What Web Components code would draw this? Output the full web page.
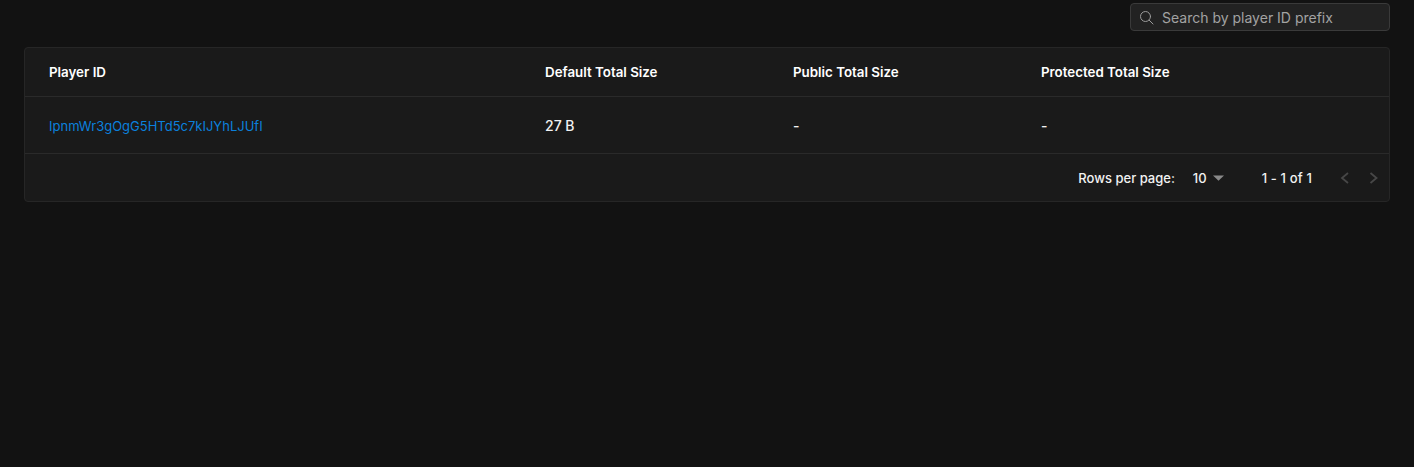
<!DOCTYPE html>
<html>
<head>
<meta charset="utf-8">
<title>Players</title>
<style>
  html, body { margin: 0; height: 100%; background: #121212; }
  body { font-family: Inter, "Liberation Sans", sans-serif; color: #fff; }
</style>
</head>
<body>
<player-page></player-page>

<script>
'use strict'

const searchTemplate = document.createElement('template');
searchTemplate.innerHTML = `
<style>
  :host {
    display: flex;
    align-items: center;
    box-sizing: border-box;
    width: 260px;
    height: 28px;
    padding: 0 8px;
    gap: 8px;
    background: #222222;
    border: 1px solid #3a3a3a;
    border-radius: 4px;
  }
  svg { flex: none; width: 15px; height: 15px; }
  input {
    flex: 1;
    min-width: 0;
    padding: 2px 0 0;
    border: 0;
    outline: 0;
    background: transparent;
    color: #fff;
    font: 400 14px/20px Inter, "Liberation Sans", sans-serif;
  }
  input::placeholder { color: #a3a3a3; opacity: 1; }
</style>
<svg viewBox="0 0 15 15" fill="none" stroke="#9b9b9b" stroke-width="1" stroke-linecap="round">
  <circle cx="6.5" cy="6.5" r="5"/>
  <path d="M10.2 10.2 14 14"/>
</svg>
<input type="text" aria-label="Search">
`;

class SearchBox extends HTMLElement {
  constructor() {
    super();
    this.attachShadow({ mode: 'open' });
    this.shadowRoot.appendChild(searchTemplate.content.cloneNode(true));
    this.shadowRoot.querySelector('input').placeholder = this.getAttribute('placeholder');
  }
}
customElements.define('search-box', SearchBox);

const rowTemplate = document.createElement('template');
rowTemplate.innerHTML = `
<style>
  :host {
    display: grid;
    grid-template-columns: 4fr 2fr 2fr 3fr;
    align-items: center;
    box-sizing: border-box;
    height: 57px;
    padding-top: 2px;
    border-bottom: 1px solid #2a2a2a;
    font: 500 14px/20px Inter, "Liberation Sans", sans-serif;
    color: #f2f2f2;
  }
  :host([head]) {
    height: 49px;
    padding-top: 0;
    font-weight: 600;
    font-size: 13.33px;
    color: #fff;
  }
  ::slotted(*) { padding-left: 24px; }
</style>
<slot></slot>
`;

class DataRow extends HTMLElement {
  constructor() {
    super();
    this.attachShadow({ mode: 'open' });
    this.shadowRoot.appendChild(rowTemplate.content.cloneNode(true));
  }
}
customElements.define('data-row', DataRow);

const pagerTemplate = document.createElement('template');
pagerTemplate.innerHTML = `
<style>
  :host {
    display: flex;
    align-items: center;
    justify-content: flex-end;
    height: 47px;
    padding-right: 4px;
    font: 500 13px/20px Inter, "Liberation Sans", sans-serif;
    color: #f2f2f2;
  }
  .label, .size, .range { padding-top: 1px; }
  .size {
    display: flex;
    align-items: center;
    gap: 6px;
    margin-left: 18px;
  }
  .range { margin-left: 38px; letter-spacing: .15px; }
  .arrows { display: flex; gap: 4px; margin-left: 21px; }
  .arrows svg { display: block; width: 24px; height: 24px; }
</style>
<span class="label">Rows per page:</span>
<span class="size">10
  <svg width="11" height="6" viewBox="0 0 11 6"><path d="M0 0.5h11L5.5 5.8z" fill="#8a8a8a"/></svg>
</span>
<span class="range">1 - 1 of 1</span>
<span class="arrows">
  <svg viewBox="0 0 24 24" fill="none" stroke="#474747" stroke-width="1.8"><path d="M15 7l-6 5 6 5"/></svg>
  <svg viewBox="0 0 24 24" fill="none" stroke="#474747" stroke-width="1.8"><path d="M9.5 7l6 5-6 5"/></svg>
</span>
`;

class TablePager extends HTMLElement {
  constructor() {
    super();
    this.attachShadow({ mode: 'open' });
    this.shadowRoot.appendChild(pagerTemplate.content.cloneNode(true));
  }
}
customElements.define('table-pager', TablePager);

const cardTemplate = document.createElement('template');
cardTemplate.innerHTML = `
<style>
  :host {
    display: block;
    background: #1a1a1a;
    border: 1px solid #262626;
    border-radius: 4px;
  }
</style>
<slot></slot>
`;

class TableCard extends HTMLElement {
  constructor() {
    super();
    this.attachShadow({ mode: 'open' });
    this.shadowRoot.appendChild(cardTemplate.content.cloneNode(true));
  }
}
customElements.define('table-card', TableCard);

const pageTemplate = document.createElement('template');
pageTemplate.innerHTML = `
<style>
  :host {
    display: block;
    padding: 3px 24px 0;
  }
  .bar {
    display: flex;
    justify-content: flex-end;
    margin-bottom: 16px;
  }
  a { color: #0b80dc; text-decoration: none; font-weight: 400; font-size: 13px; }
</style>
<div class="bar">
  <search-box placeholder="Search by player ID prefix"></search-box>
</div>
<table-card>
  <data-row head>
    <span>Player ID</span>
    <span>Default Total Size</span>
    <span>Public Total Size</span>
    <span>Protected Total Size</span>
  </data-row>
  <data-row>
    <a href="#">IpnmWr3gOgG5HTd5c7kIJYhLJUfI</a>
    <span>27 B</span>
    <span>-</span>
    <span>-</span>
  </data-row>
  <table-pager></table-pager>
</table-card>
`;

class PlayerPage extends HTMLElement {
  constructor() {
    super();
    this.attachShadow({ mode: 'open' });
    this.shadowRoot.appendChild(pageTemplate.content.cloneNode(true));
  }
}
customElements.define('player-page', PlayerPage);
</script>
</body>
</html>
